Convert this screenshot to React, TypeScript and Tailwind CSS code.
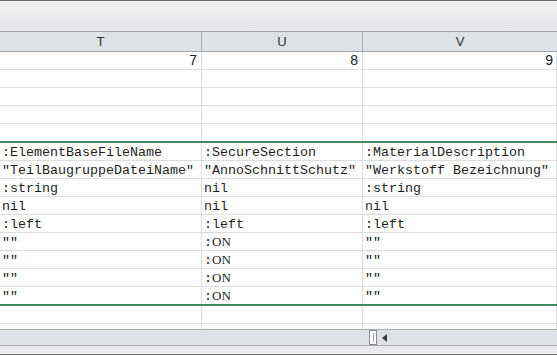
import React from "react";

const mono = { fontFamily: '"Liberation Mono", "Courier New", monospace' };

type Cell = React.ReactNode;

function Row({ cells, h = "h-[18px]", border = true }: { cells: Cell[]; h?: string; border?: boolean }) {
  const widths = ["w-[202px]", "w-[161px]", "w-[194px]"];
  return (
    <div className={`flex ${h} ${border ? "border-b border-[#dadcdd]" : ""}`}>
      {widths.map((w, i) => (
        <div
          key={i}
          className={`${w} shrink-0 border-r border-[#dadcdd] flex items-center pl-[2px] pt-[2px] text-[13.33px] text-[#1e1e1e] leading-none whitespace-nowrap overflow-hidden`}
          style={mono}
        >
          {cells[i]}
        </div>
      ))}
    </div>
  );
}

const ON = (
  <span>
    <span style={mono}>:</span>
    <span style={{ fontFamily: '"Liberation Serif", "Times New Roman", serif' }} className="text-[13px]">ON</span>
  </span>
);

export default function App() {
  const sans = { fontFamily: '"Liberation Sans", Arial, sans-serif' };
  const data: Cell[][] = [
    [":ElementBaseFileName", ":SecureSection", ":MaterialDescription"],
    ['"TeilBaugruppeDateiName"', '"AnnoSchnittSchutz"', '"Werkstoff Bezeichnung"'],
    [":string", "nil", ":string"],
    ["nil", "nil", "nil"],
    [":left", ":left", ":left"],
    ['""', ON, '""'],
    ['""', ON, '""'],
    ['""', ON, '""'],
    ['""', ON, '""'],
  ];
  return (
    <div className="w-[557px] h-[355px] overflow-hidden bg-white flex flex-col">
      <div className="h-[1px] bg-[#6e6f71]" />
      <div className="h-[30px] bg-gradient-to-b from-[#f0f1f3] to-[#e3e5e8]" />
      <div className="h-[21px] flex border-y border-[#a3a5a8] bg-[#dfe2e6] text-[13px] text-[#333]" style={sans}>
        <div className="w-[202px] border-r border-[#a9abae] flex items-center justify-center">T</div>
        <div className="w-[161px] border-r border-[#a9abae] flex items-center justify-center">U</div>
        <div className="w-[194px] flex items-center justify-center">V</div>
      </div>
      <div className="flex h-[18px] border-b border-[#dadcdd] text-[14px] text-[#222]" style={sans}>
        <div className="w-[202px] border-r border-[#dadcdd] flex items-center justify-end pr-[4px]">7</div>
        <div className="w-[161px] border-r border-[#dadcdd] flex items-center justify-end pr-[4px]">8</div>
        <div className="w-[194px] border-r border-[#dadcdd] flex items-center justify-end pr-[3px]">9</div>
      </div>
      <Row cells={[]} />
      <Row cells={[]} />
      <Row cells={[]} />
      <Row cells={[]} h="h-[17px]" border={false} />
      <div className="h-[2px] bg-[#3f8a62]" />
      {data.map((r, i) => (
        <Row key={i} cells={r} h={i === data.length - 1 ? "h-[17px]" : "h-[18px]"} border={i !== data.length - 1} />
      ))}
      <div className="h-[2px] bg-[#3f8a62]" />
      <Row cells={[]} h="h-[18px]" />
      <Row cells={[]} h="h-[5px]" border={false} />
      <div className="h-[17px] border-y border-[#a9abae] bg-[#dee1e6] flex items-center">
        <div className="w-[369px]" />
        <div className="w-[8px] h-[15px] bg-white border border-[#8b8d90] flex items-center justify-center">
          <div className="w-[1px] h-[9px] bg-[#9a9a9a]" />
        </div>
        <div className="w-[5px]" />
        <div className="w-0 h-0 border-y-[4px] border-y-transparent border-r-[5px] border-r-[#3b3b3b]" />
      </div>
      <div className="flex-1 bg-[#e9ebee] border-b border-[#6e6f71]" />
    </div>
  );
}
